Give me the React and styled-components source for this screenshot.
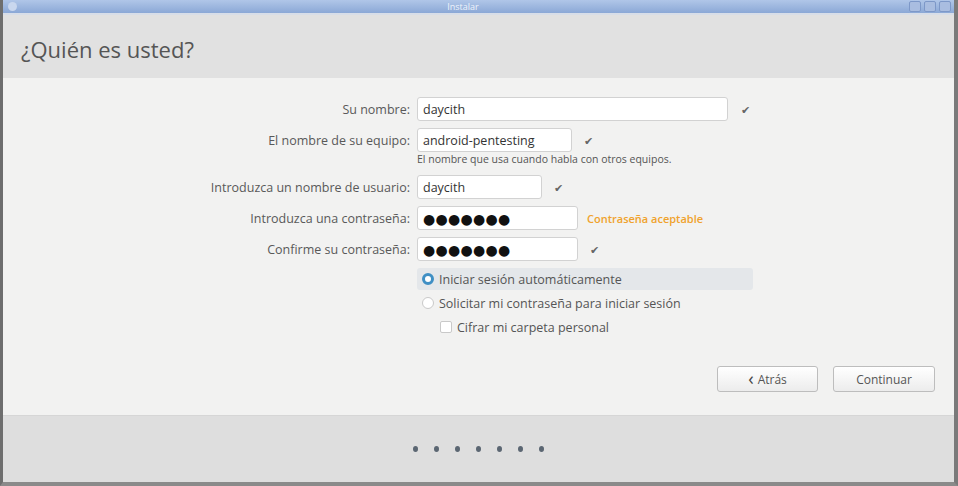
import React from 'react'
import styled, { createGlobalStyle } from 'styled-components'

const Global = createGlobalStyle`
  html, body { margin: 0; padding: 0; overflow: hidden; background: #f2f2f1; }
  * { box-sizing: border-box; }
`

const Window = styled.div`
  width: 958px;
  height: 486px;
  display: flex;
  flex-direction: column;
  border-left: 3px solid #6e6e6e;
  border-right: 4px solid #7a7a7a;
  border-bottom: 4px solid #8a8a8a;
  font-family: "Open Sans", "DejaVu Sans", sans-serif;
  color: #4a4a4a;
`

const TitleBar = styled.div`
  height: 15px;
  flex: none;
  display: flex;
  align-items: center;
  justify-content: space-between;
  padding: 0 3px 0 5px;
  background: linear-gradient(#b0c6e8, #8ba8d6);
  border-bottom: 2px solid #d8dee8;
  color: #eef3fb;
  font-size: 9px;
`

const WinIcon = styled.div`
  width: 9px;
  height: 9px;
  border-radius: 50%;
  background: #c9d7ee;
`

const WinButtons = styled.div`
  display: flex;
  gap: 3px;
`

const WinButton = styled.div`
  width: 12px;
  height: 11px;
  border-radius: 2px;
  background: #a9bde0;
  border: 1px solid #7d98c8;
`

const Header = styled.div`
  height: 63px;
  flex: none;
  display: flex;
  align-items: center;
  padding: 4px 0 0 18px;
  background: #e1e1e1;
  font-size: 22px;
  color: #555;
`

const Body = styled.div`
  flex: 1;
  display: flex;
  flex-direction: column;
  padding: 19px 19px 0 0;
  background: #f2f2f1;
`

const Row = styled.div`
  display: flex;
  align-items: center;
  height: 24px;
  margin-bottom: ${p => p.$gap ?? 7}px;
`

const Label = styled.div`
  width: 414px;
  flex: none;
  text-align: right;
  padding-right: 7px;
  font-size: 12.5px;
  color: #595959;
`

const Field = styled.div`
  width: ${p => p.$w}px;
  height: 24px;
  display: flex;
  align-items: center;
  padding-left: 5px;
  background: #fff;
  border: 1px solid #d2d2d2;
  border-radius: 3px;
  font-size: 12.5px;
  color: #333;
`

const Dots = styled.span`
  font-size: 14px;
  letter-spacing: 0.3px;
  color: #111;
`

const Check = styled.span`
  margin-left: ${p => p.$m ?? 12}px;
  font-size: 11px;
  color: #666;
`

const Hint = styled.div`
  margin: -3px 0 9px 414px;
  font-size: 10.5px;
  line-height: 13px;
  color: #555;
`

const Strength = styled.span`
  margin-left: 9px;
  font-size: 11px;
  font-weight: 600;
  color: #f0a22c;
`

const Options = styled.div`
  display: flex;
  flex-direction: column;
  gap: 2px;
  margin-top: 3px;
`

const OptionRow = styled.div`
  display: flex;
  align-items: center;
  gap: 5px;
  width: 336px;
  height: 22px;
  margin-left: ${p => p.$indent ? 432 : 414}px;
  padding-left: 5px;
  border-radius: 3px;
  background: ${p => p.$active ? '#e4e7ea' : 'transparent'};
  font-size: 12.5px;
  color: #555;
`

const Radio = styled.span`
  width: 12px;
  height: 12px;
  flex: none;
  border-radius: 50%;
  border: ${p => p.$on ? '3px solid #3f8fc4' : '1px solid #c9c9c9'};
  background: #fff;
`

const Box = styled.span`
  width: 12px;
  height: 12px;
  flex: none;
  border-radius: 2px;
  border: 1px solid #c9c9c9;
  background: #fff;
`

const Buttons = styled.div`
  display: flex;
  justify-content: flex-end;
  gap: 15px;
  margin-top: 28px;
`

const Button = styled.div`
  width: ${p => p.$w}px;
  height: 26px;
  display: flex;
  align-items: center;
  justify-content: center;
  gap: 4px;
  border: 1px solid #bdbdbd;
  border-radius: 3px;
  background: linear-gradient(#ffffff, #ececec);
  font-size: 12px;
  color: #555;
`

const Chevron = styled.span`
  font-size: 18px;
  line-height: 1;
  margin-top: -2px;
  color: #444;
`

const Footer = styled.div`
  height: 67px;
  flex: none;
  display: flex;
  align-items: center;
  justify-content: center;
  gap: 16px;
  background: #dedede;
  border-top: 1px solid #d6d6d6;
`

const Dot = styled.span`
  width: 5px;
  height: 6px;
  border-radius: 50%;
  background: #5b6672;
`

export default function App() {
  return (
    <>
      <Global />
      <Window>
        <TitleBar>
          <WinIcon />
          <span>Instalar</span>
          <WinButtons>
            <WinButton />
            <WinButton />
            <WinButton />
          </WinButtons>
        </TitleBar>
        <Header>¿Quién es usted?</Header>
        <Body>
          <Row>
            <Label>Su nombre:</Label>
            <Field $w={311}>daycith</Field>
            <Check $m={13}>✔</Check>
          </Row>
          <Row $gap={4}>
            <Label>El nombre de su equipo:</Label>
            <Field $w={155}>android-pentesting</Field>
            <Check>✔</Check>
          </Row>
          <Hint>El nombre que usa cuando habla con otros equipos.</Hint>
          <Row>
            <Label>Introduzca un nombre de usuario:</Label>
            <Field $w={125}>daycith</Field>
            <Check>✔</Check>
          </Row>
          <Row>
            <Label>Introduzca una contraseña:</Label>
            <Field $w={161}><Dots>●●●●●●●</Dots></Field>
            <Strength>Contraseña aceptable</Strength>
          </Row>
          <Row $gap={4}>
            <Label>Confirme su contraseña:</Label>
            <Field $w={161}><Dots>●●●●●●●</Dots></Field>
            <Check>✔</Check>
          </Row>
          <Options>
            <OptionRow $active>
              <Radio $on />
              Iniciar sesión automáticamente
            </OptionRow>
            <OptionRow>
              <Radio />
              Solicitar mi contraseña para iniciar sesión
            </OptionRow>
            <OptionRow $indent>
              <Box />
              Cifrar mi carpeta personal
            </OptionRow>
          </Options>
          <Buttons>
            <Button $w={101}><Chevron>‹</Chevron>Atrás</Button>
            <Button $w={102}>Continuar</Button>
          </Buttons>
        </Body>
        <Footer>
          {Array.from({ length: 7 }).map((_, i) => <Dot key={i} />)}
        </Footer>
      </Window>
    </>
  )
}
